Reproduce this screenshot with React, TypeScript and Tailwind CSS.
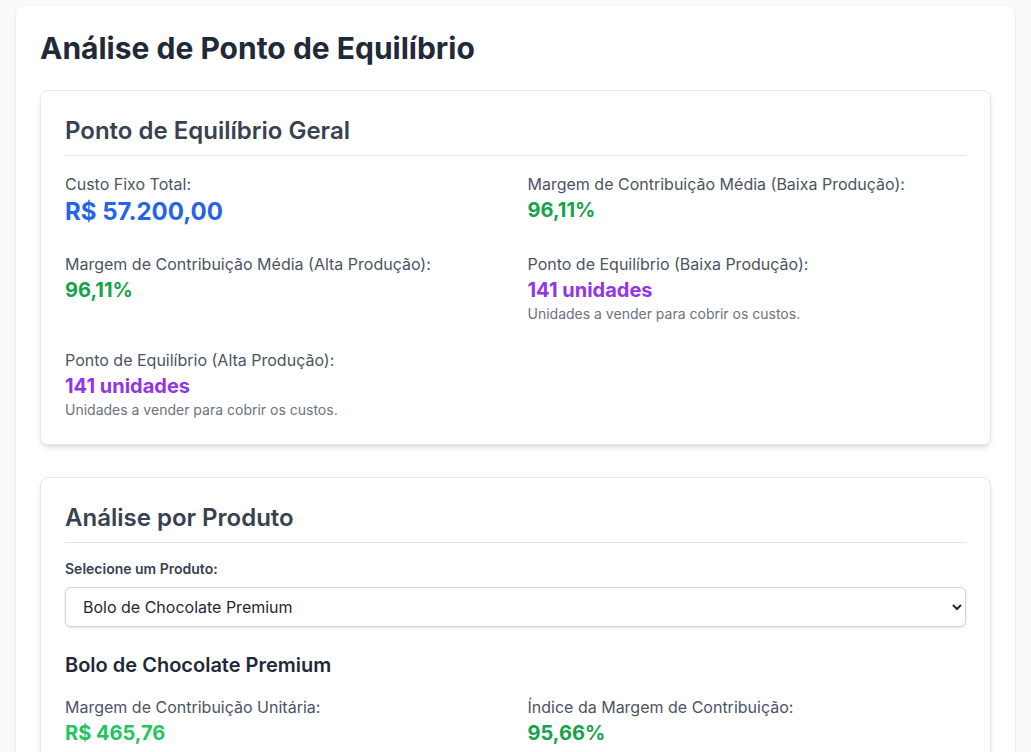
import { useState } from "react";

const PRODUCTS = ["Bolo de Chocolate Premium", "Torta de Morango", "Cheesecake de Frutas Vermelhas"];

export default function App() {
  const [product, setProduct] = useState(PRODUCTS[0]);

  return (
    <div
      className="min-h-screen bg-[#f8f9fb] px-4 pt-[6px]"
      style={{ fontFamily: "Inter, 'Noto Sans', sans-serif" }}
    >
      <div className="bg-white rounded-lg shadow-sm p-6">
        <h1 className="text-3xl font-bold text-[#1f2937] mb-6">Análise de Ponto de Equilíbrio</h1>

        <section className="border border-[#e5e7eb] rounded-lg shadow-md p-6 mb-8">
          <h2 className="text-2xl font-semibold text-[#374151] pb-2 border-b border-[#e5e7eb] mb-4">
            Ponto de Equilíbrio Geral
          </h2>
          <div className="grid grid-cols-2 gap-6">
            <Stat label="Custo Fixo Total:" value="R$ 57.200,00" valueClass="text-2xl text-[#2563eb]" />
            <Stat
              label="Margem de Contribuição Média (Baixa Produção):"
              value="96,11%"
              valueClass="text-xl text-[#16a34a]"
            />
            <Stat
              label="Margem de Contribuição Média (Alta Produção):"
              value="96,11%"
              valueClass="text-xl text-[#16a34a]"
            />
            <Stat
              label="Ponto de Equilíbrio (Baixa Produção):"
              value="141 unidades"
              valueClass="text-xl text-[#9333ea]"
              note="Unidades a vender para cobrir os custos."
            />
            <Stat
              label="Ponto de Equilíbrio (Alta Produção):"
              value="141 unidades"
              valueClass="text-xl text-[#9333ea]"
              note="Unidades a vender para cobrir os custos."
            />
          </div>
        </section>

        <section className="border border-[#e5e7eb] rounded-lg shadow-md p-6">
          <h2 className="text-2xl font-semibold text-[#374151] pb-2 border-b border-[#e5e7eb] mb-4">
            Análise por Produto
          </h2>
          <label className="block text-sm font-semibold text-[#374151] mb-2">Selecione um Produto:</label>
          <select
            value={product}
            onChange={(e) => setProduct(e.target.value)}
            className="w-full h-10 pl-[13px] pr-4 border border-[#d1d5db] rounded-md shadow-sm bg-white text-[#1f2937] text-base mb-6"
          >
            {PRODUCTS.map((p) => (
              <option key={p}>{p}</option>
            ))}
          </select>

          <h3 className="text-xl font-semibold text-[#1f2937] mb-4">{product}</h3>
          <div className="grid grid-cols-2 gap-6">
            <Stat
              label="Margem de Contribuição Unitária:"
              value="R$ 465,76"
              valueClass="text-xl text-[#22c55e]"
            />
            <Stat
              label="Índice da Margem de Contribuição:"
              value="95,66%"
              valueClass="text-xl text-[#16a34a]"
            />
          </div>
        </section>
      </div>
    </div>
  );
}

function Stat({
  label,
  value,
  valueClass,
  note,
}: {
  label: string;
  value: string;
  valueClass: string;
  note?: string;
}) {
  return (
    <div>
      <p className="text-base text-[#4b5563]">{label}</p>
      <p className={`font-bold ${valueClass}`}>{value}</p>
      {note && <p className="text-sm text-[#6b7280]">{note}</p>}
    </div>
  );
}
